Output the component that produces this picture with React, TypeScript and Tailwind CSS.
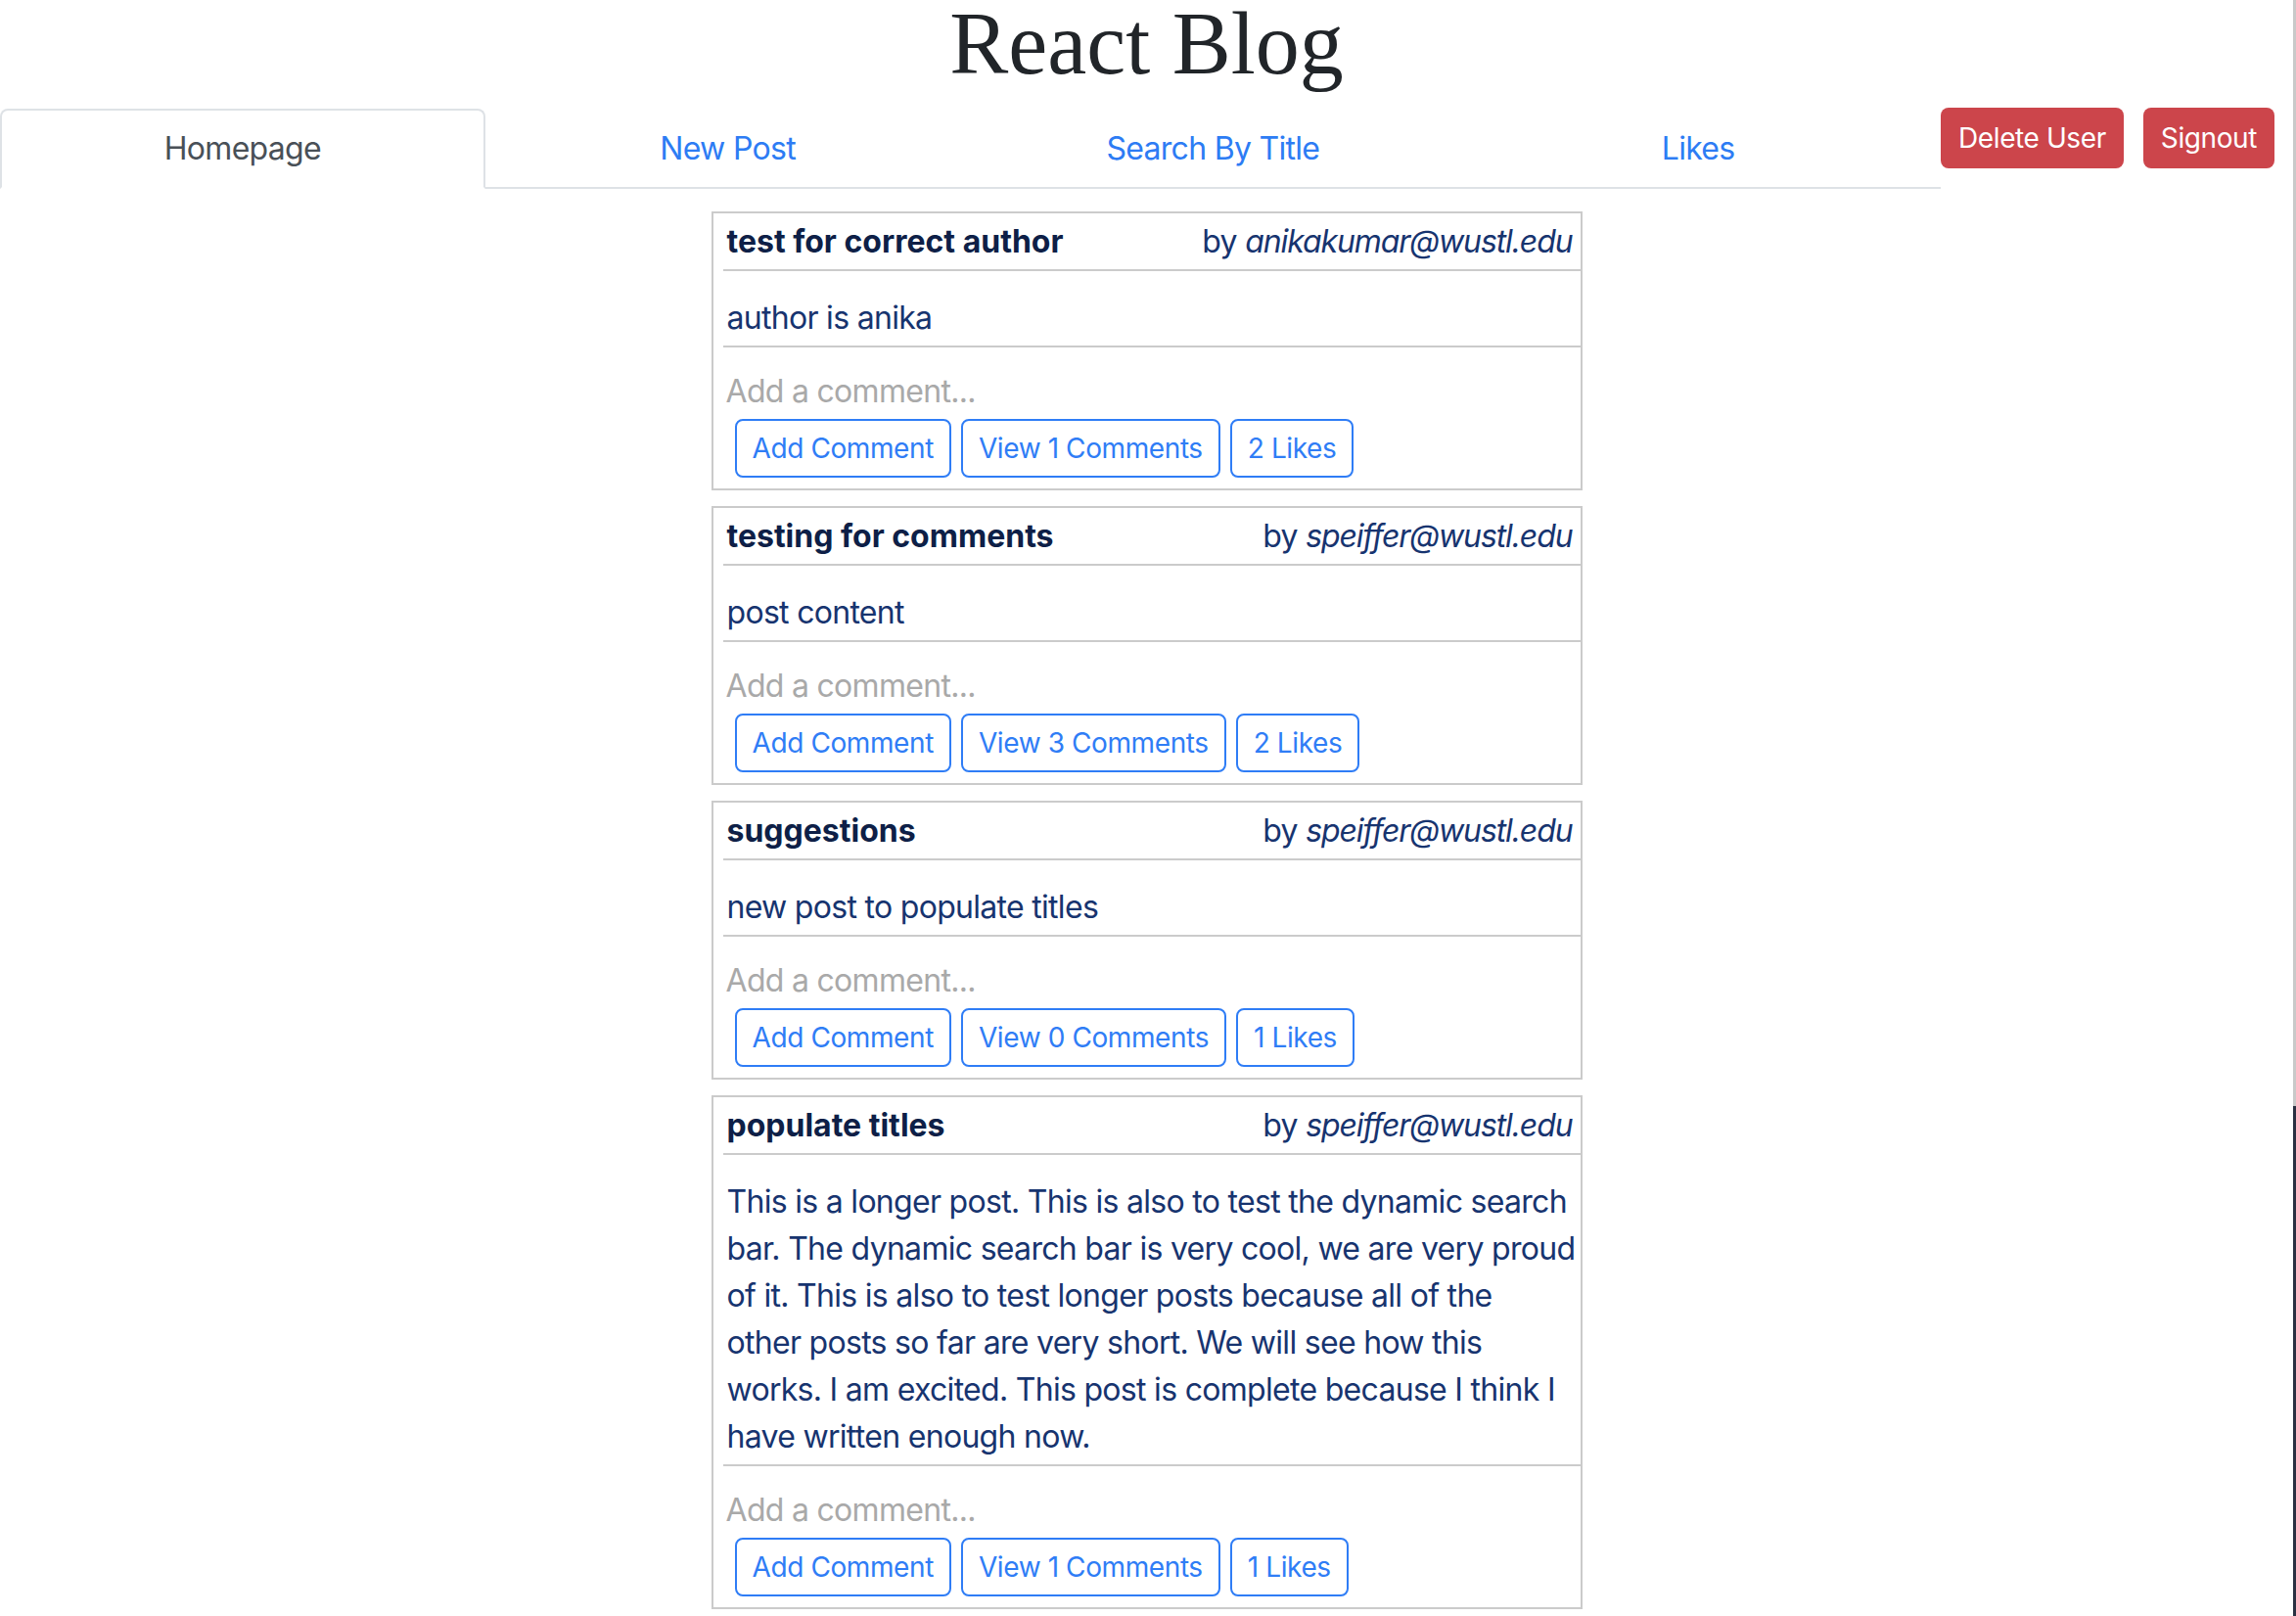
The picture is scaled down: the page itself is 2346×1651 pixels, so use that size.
import React from 'react';

interface Post {
  id: number;
  title: string;
  author: string;
  content: string;
  comments: number;
  likes: number;
}

// long post keeps the line breaks it shows on screen
const posts: Post[] = [
  { id: 1, title: 'test for correct author', author: 'anikakumar@wustl.edu', content: 'author is anika', comments: 1, likes: 2 },
  { id: 2, title: 'testing for comments', author: 'speiffer@wustl.edu', content: 'post content', comments: 3, likes: 2 },
  { id: 3, title: 'suggestions', author: 'speiffer@wustl.edu', content: 'new post to populate titles', comments: 0, likes: 1 },
  {
    id: 4,
    title: 'populate titles',
    author: 'speiffer@wustl.edu',
    content:
      'This is a longer post. This is also to test the dynamic search\nbar. The dynamic search bar is very cool, we are very proud\nof it. This is also to test longer posts because all of the\nother posts so far are very short. We will see how this\nworks. I am excited. This post is complete because I think I\nhave written enough now.',
    comments: 1,
    likes: 1,
  },
];

const tabs = ['Homepage', 'New Post', 'Search By Title', 'Likes'];

const sans = "font-['Inter','Noto_Sans',sans-serif]";

const outlineBtn =
  'h-[60px] px-[16px] border-2 border-[#2f7df6] rounded-[8px] text-[28px] tracking-[-0.4px] text-[#2f7df6]';

const PostCard: React.FC<{ post: Post }> = ({ post }) => (
  <div className="border-2 border-[#cbcbcb] pl-[10px] mb-[16px]">
    {/* Header */}
    <div className="flex justify-between items-baseline border-b-2 border-[#cbcbcb] pl-[4px] pr-[8px] pt-[5px] pb-[4px] text-[32px] leading-[48px]">
      <span className="font-bold tracking-normal text-[#0e1f47]">{post.title}</span>
      <span className="text-[#17346f]">
        by <em className="italic tracking-[-1.1px]">{post.author}</em>
      </span>
    </div>

    {/* Content */}
    <div className="whitespace-pre-line border-b-2 border-[#cbcbcb] pl-[4px] pr-0 pt-[24px] pb-[4px] text-[32px] leading-[48px] tracking-[-0.7px] text-[#17346f]">
      {post.content}
    </div>

    {/* Comment box */}
    <div className="pt-[21px] pb-[11px]">
      <input
        type="text"
        placeholder="Add a comment..."
        className="block w-full h-[48px] pl-[3px] text-[32px] leading-[48px] tracking-[-0.7px] bg-transparent outline-none placeholder:text-[#a9a9a9]"
      />
      <div className="flex gap-[10px] mt-[4px] ml-[12px]">
        <button className={outlineBtn}>Add Comment</button>
        <button className={outlineBtn}>View {post.comments} Comments</button>
        <button className={outlineBtn}>{post.likes} Likes</button>
      </div>
    </div>
  </div>
);

export default function App() {
  return (
    <div className={`flex min-h-[1651px] bg-white tracking-[-0.7px] ${sans}`}>
      <div className="flex-1">
        {/* Title */}
        <div className="h-[110px] text-center">
          <h1 className="font-['Liberation_Serif',serif] text-[90px] leading-[90px] tracking-normal text-[#212529]">
            React Blog
          </h1>
        </div>

        {/* Nav + actions */}
        <div className="flex items-start">
          <nav className="flex-1 grid grid-cols-4 border-b-2 border-[#dee2e6] mt-[1px]">
            {tabs.map((tab, i) => (
              <a
                key={tab}
                className={`block -mb-[2px] py-[15px] text-center text-[32px] leading-[48px] border-2 rounded-t-[8px] ${
                  i === 0
                    ? 'border-[#dee2e6] border-b-white bg-white text-[#495057]'
                    : 'border-transparent text-[#2d7cf4]'
                }`}
              >
                {tab}
              </a>
            ))}
          </nav>
          <div className="flex gap-[20px] pr-[19px]">
            <button className="h-[62px] px-[18px] rounded-[8px] bg-[#cc454b] text-white text-[28px] tracking-[-0.4px]">
              Delete User
            </button>
            <button className="h-[62px] px-[18px] rounded-[8px] bg-[#cc454b] text-white text-[28px] tracking-[-0.4px]">
              Signout
            </button>
          </div>
        </div>

        {/* Posts */}
        <div className="w-[890px] mx-auto mt-[23px]">
          {posts.map((post) => (
            <PostCard key={post.id} post={post} />
          ))}
        </div>
      </div>

      {/* window edge */}
      <div className="w-[3px] flex flex-col">
        <div className="h-[1130px] bg-[#c9c9c9]" />
        <div className="flex-1 bg-[#2b3142]" />
      </div>
    </div>
  );
}
